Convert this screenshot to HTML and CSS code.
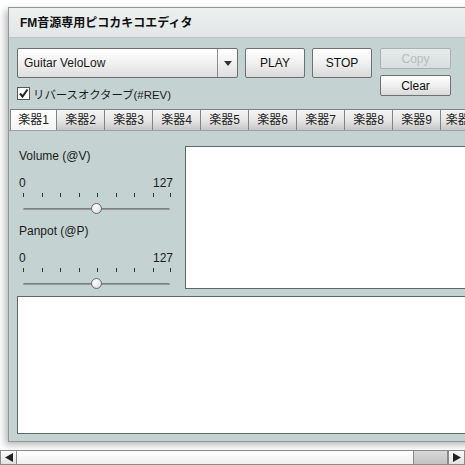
FILE: index.html
```html
<!DOCTYPE html>
<html>
<head>
<meta charset="utf-8">
<link rel="stylesheet" href="styles.css">
</head>
<body>
<div class="screen">
  <div class="window">
    <div class="titlebar">FM音源専用ピコカキコエディタ</div>
    <div class="content">
      <div class="toprow">
        <div class="leftcol">
          <div class="combo">
            <span class="combo-text">Guitar VeloLow</span>
            <span class="combo-btn"><svg width="8" height="5" viewBox="0 0 8 5"><path d="M0 0H8L4 5Z" fill="#333"/></svg></span>
          </div>
          <div class="check">
            <span class="cbox"><svg width="11" height="11" viewBox="0 0 11 11"><path d="M2 5.5L4.5 8.5L9.5 1.5" fill="none" stroke="#222" stroke-width="2"/></svg></span>
            <span class="check-label">リバースオクターブ(#REV)</span>
          </div>
        </div>
        <button class="btn big">PLAY</button>
        <button class="btn big">STOP</button>
        <div class="stack">
          <button class="btn small disabled">Copy</button>
          <button class="btn small">Clear</button>
        </div>
      </div>
      <div class="tabs">
        <div class="tab first selected">楽器1</div>
        <div class="tab">楽器2</div>
        <div class="tab">楽器3</div>
        <div class="tab">楽器4</div>
        <div class="tab">楽器5</div>
        <div class="tab">楽器6</div>
        <div class="tab">楽器7</div>
        <div class="tab">楽器8</div>
        <div class="tab">楽器9</div>
        <div class="tab">楽器10</div>
      </div>
      <div class="panel">
        <div class="upper">
          <div class="sliders">
            <div class="slider-sec">
              <div class="s-label">Volume (@V)</div>
              <div class="s-scale"><span>0</span><span>127</span></div>
              <div class="ticks">
                <i style="left:0%"></i><i style="left:12.6%"></i><i style="left:25.2%"></i><i style="left:37.8%"></i><i style="left:50.4%"></i><i style="left:63%"></i><i style="left:75.6%"></i><i style="left:88.2%"></i><i style="left:100%"></i>
              </div>
              <div class="track"><div class="groove"></div><div class="thumb" style="left:50.4%"></div></div>
            </div>
            <div class="slider-sec">
              <div class="s-label">Panpot (@P)</div>
              <div class="s-scale"><span>0</span><span>127</span></div>
              <div class="ticks">
                <i style="left:0%"></i><i style="left:12.6%"></i><i style="left:25.2%"></i><i style="left:37.8%"></i><i style="left:50.4%"></i><i style="left:63%"></i><i style="left:75.6%"></i><i style="left:88.2%"></i><i style="left:100%"></i>
              </div>
              <div class="track"><div class="groove"></div><div class="thumb" style="left:50.4%"></div></div>
            </div>
          </div>
          <div class="whitebox upper-box"></div>
        </div>
        <div class="whitebox lower-box"></div>
      </div>
    </div>
  </div>
  <div class="hscroll">
    <div class="sb-btn"><svg width="8" height="9" viewBox="0 0 8 9"><path d="M8 0V9L0 4.5Z" fill="#222"/></svg></div>
    <div class="sb-track"></div>
    <div class="sb-thumb"></div>
    <div class="sb-btn"><svg width="8" height="9" viewBox="0 0 8 9"><path d="M0 0V9L8 4.5Z" fill="#222"/></svg></div>
  </div>
</div>
</body>
</html>
```

FILE: styles.css
```css
html, body {
  margin: 0;
  padding: 0;
  background: #ffffff;
}
body {
  font-family: "Liberation Sans", "Noto Sans CJK JP", sans-serif;
  font-size: 12px;
  color: #1a1a1a;
}
.screen {
  width: 465px;
  height: 465px;
  overflow: hidden;
  padding: 7px 0 0 8px;
  box-sizing: border-box;
}
.window {
  width: 600px;
  height: 435px;
  box-sizing: border-box;
  border: 1px solid #8e9898;
  background: #c4d2d1;
  box-shadow: -3px 3px 7px rgba(0, 0, 0, 0.28);
  display: flex;
  flex-direction: column;
}
.titlebar {
  height: 30px;
  box-sizing: border-box;
  background: linear-gradient(#eef0f0, #e2e6e6);
  border-bottom: 1px solid #b9c4c3;
  font-weight: bold;
  font-size: 12px;
  line-height: 31px;
  padding-left: 11px;
  color: #111;
}
.content {
  flex: 1;
  display: flex;
  flex-direction: column;
}
.toprow {
  display: flex;
  align-items: flex-start;
  margin-top: 10px;
  padding-left: 8px;
}
.leftcol {
  display: flex;
  flex-direction: column;
  width: 221px;
}
.combo {
  height: 30px;
  box-sizing: border-box;
  border: 1px solid #6b6f6f;
  border-radius: 2px;
  background: linear-gradient(#ffffff, #f1f1f1 50%, #dedede);
  display: flex;
  align-items: center;
}
.combo-text {
  flex: 1;
  padding-left: 6px;
  font-size: 12px;
}
.combo-btn {
  width: 19px;
  height: 100%;
  border-left: 1px solid #8a8e8e;
  display: flex;
  align-items: center;
  justify-content: center;
}
.check {
  display: flex;
  align-items: center;
  margin-top: 8px;
  height: 15px;
}
.cbox {
  width: 11px;
  height: 11px;
  border: 1px solid #555;
  background: #fff;
  display: flex;
  margin-right: 3px;
}
.check-label {
  font-size: 11.4px;
}
.btn {
  font-family: "Liberation Sans", "Noto Sans CJK JP", sans-serif;
  font-size: 12px;
  color: #111;
  border: 1px solid #6d7171;
  border-radius: 2px;
  background: linear-gradient(#ffffff, #f0f0f0 50%, #d9d9d9);
  padding: 0;
  box-sizing: border-box;
}
.btn.big {
  width: 60px;
  height: 30px;
  margin-left: 7px;
}
.btn.big + .btn.big {
  margin-left: 7px;
}
.stack {
  display: flex;
  flex-direction: column;
  gap: 6px;
  margin-left: 8px;
}
.btn.small {
  width: 71px;
  height: 21px;
}
.btn.disabled {
  color: #b7bdbd;
  border-color: #a9b1b1;
  background: linear-gradient(#e6eaea, #d9dfdf);
}
.tabs {
  display: flex;
  margin-top: 8px;
  margin-left: 1px;
  height: 22px;
}
.tab {
  width: 48px;
  height: 22px;
  box-sizing: border-box;
  border: 1px solid #7d8484;
  border-left: none;
  background: linear-gradient(#f4f4f4, #e4e4e4 55%, #c6c6c6);
  font-size: 12px;
  line-height: 20px;
  text-align: center;
  flex-shrink: 0;
  color: #222;
}
.tab.first {
  width: 47px;
  border-left: 1px solid #7d8484;
}
.tab.selected {
  background: linear-gradient(#ffffff, #f4f4f4);
  border-bottom-color: #f4f4f4;
}
.panel {
  flex: 1;
  padding: 15px 0 0 8px;
  display: flex;
  flex-direction: column;
  gap: 7px;
  border-top: 1px solid #9aa3a3;
  margin-top: -1px;
}
.upper {
  display: flex;
  height: 143px;
}
.sliders {
  width: 168px;
  box-sizing: border-box;
  padding-left: 2px;
}
.slider-sec {
  width: 154px;
  padding-top: 2px;
  margin-bottom: 4px;
}
.s-label {
  line-height: 16px;
  height: 16px;
}
.s-scale {
  display: flex;
  justify-content: space-between;
  line-height: 16px;
  height: 16px;
  margin-top: 11px;
}
.ticks {
  position: relative;
  height: 4px;
  margin: 2px 3px 0 4px;
}
.ticks i {
  position: absolute;
  top: 0;
  width: 1px;
  height: 4px;
  background: #333;
}
.track {
  position: relative;
  height: 16px;
  margin: 4px 3px 0 4px;
}
.groove {
  position: absolute;
  left: 0;
  right: 0;
  top: 7px;
  height: 3px;
  border-radius: 2px;
  background: linear-gradient(#6e7474, #9aa2a2 60%, #e4ecec);
}
.thumb {
  position: absolute;
  top: 2px;
  width: 11px;
  height: 11px;
  margin-left: -6px;
  border-radius: 50%;
  box-sizing: border-box;
  border: 1px solid #6a7070;
  background: radial-gradient(circle at 40% 35%, #ffffff, #e6e6e6 60%, #c4c4c4);
}
.whitebox {
  background: #ffffff;
  border: 1px solid #5f6666;
  box-sizing: border-box;
}
.upper-box {
  flex: 1;
}
.lower-box {
  height: 138px;
}
.hscroll {
  display: flex;
  height: 15px;
  margin: 8px 0 0 -8px;
  width: 465px;
}
.sb-btn {
  width: 17px;
  height: 15px;
  box-sizing: border-box;
  border: 1px solid #8a8a8a;
  background: linear-gradient(#fafafa, #e2e2e2);
  display: flex;
  align-items: center;
  justify-content: center;
  flex-shrink: 0;
}
.sb-track {
  flex: 1;
  height: 15px;
  box-sizing: border-box;
  border-top: 1px solid #8a8a8a;
  border-bottom: 1px solid #8a8a8a;
  background: linear-gradient(#ffffff, #f0f0f0);
}
.sb-thumb {
  width: 35px;
  height: 15px;
  box-sizing: border-box;
  border: 1px solid #8a8a8a;
  background: linear-gradient(#d8d8d8, #c2c2c2);
  flex-shrink: 0;
}
```
